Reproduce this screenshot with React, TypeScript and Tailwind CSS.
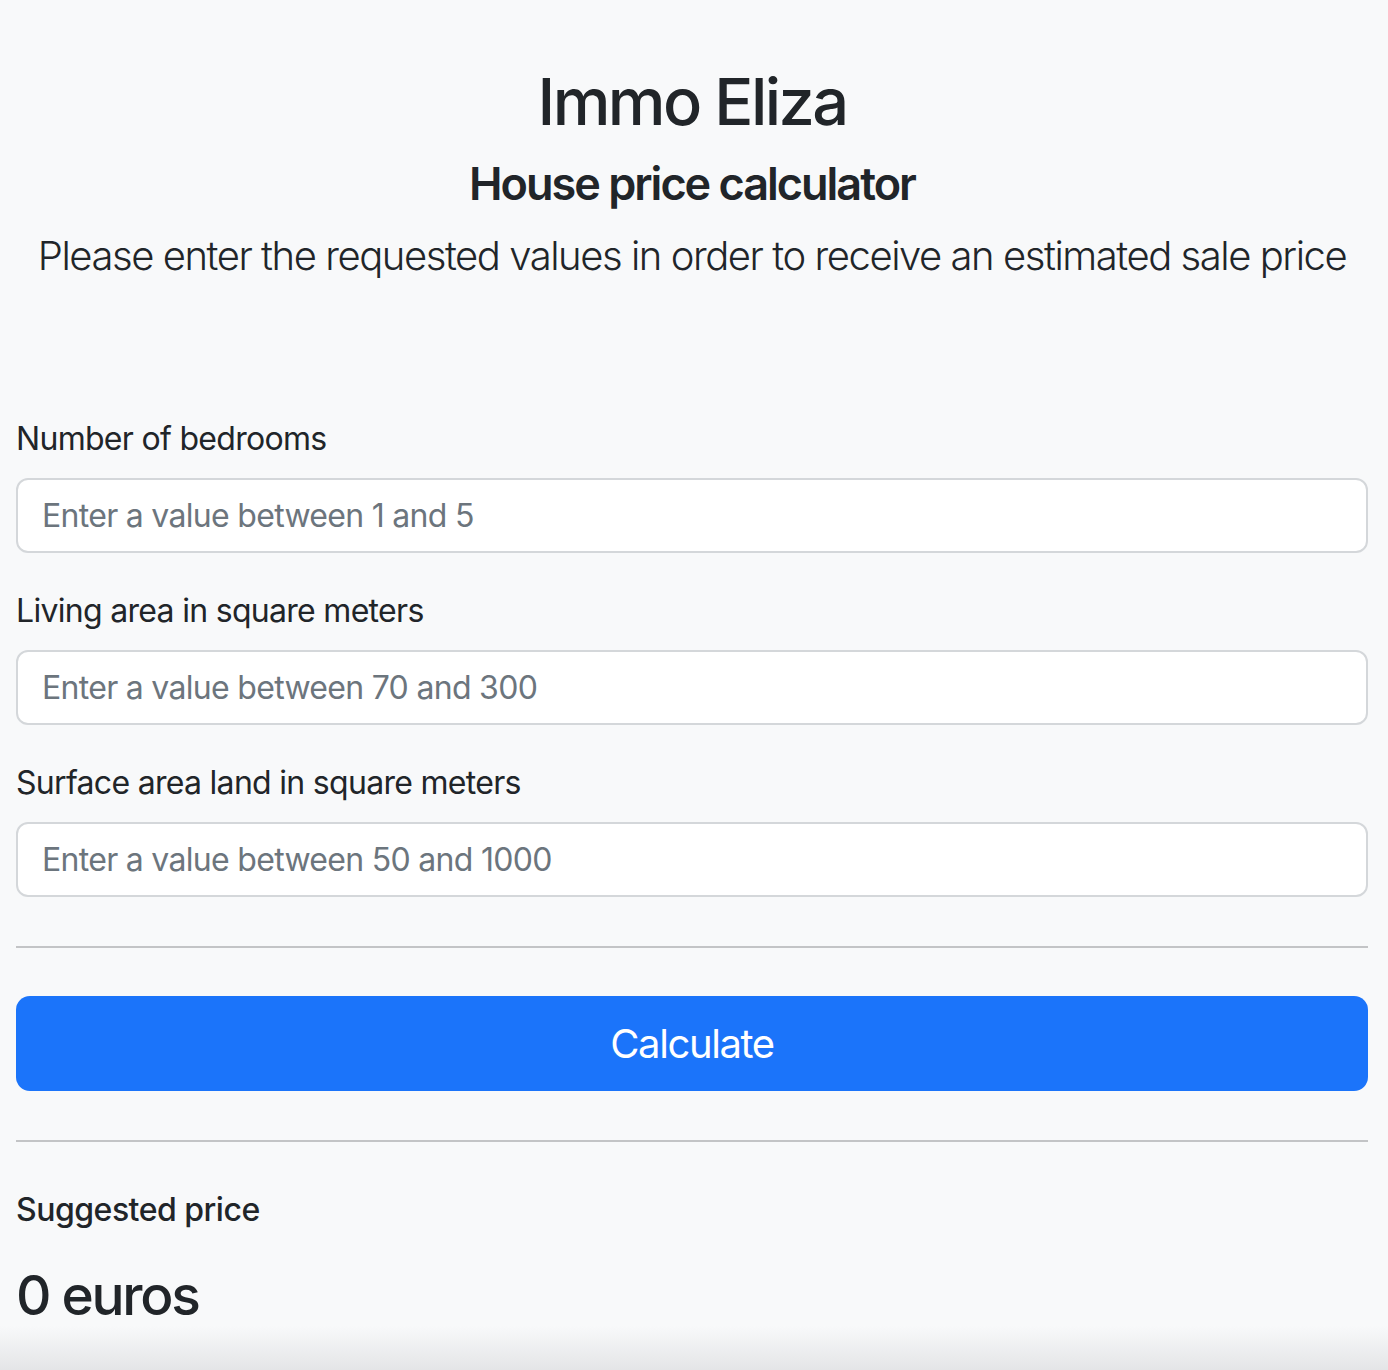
import React from "react";

const font = { fontFamily: "Inter, 'Noto Sans', sans-serif" };

function Field({ label, placeholder }: { label: string; placeholder: string }) {
  return (
    <div className="flex flex-col">
      <label className="text-[32px] leading-[48px] tracking-[-0.7px] text-[#212529]">{label}</label>
      <input
        type="text"
        placeholder={placeholder}
        className="mt-[15px] h-[75px] w-full rounded-[12px] border-2 border-[#d4d7da] bg-white px-[24px] text-[32px] tracking-[-0.7px] text-[#212529] placeholder:text-[#6c757d] outline-none"
      />
    </div>
  );
}

export default function App() {
  return (
    <div
      className="relative min-h-[1370px] bg-[#f8f9fa] pl-4 pr-5 text-[#212529]"
      style={font}
    >
      <header className="flex flex-col items-center pt-[63px] text-center">
        <h1 className="text-[65px] font-medium leading-[78px] tracking-[-2.6px]">Immo Eliza</h1>
        <h2 className="mt-[16px] text-[45px] font-semibold leading-[54px] tracking-[-2px]">House price calculator</h2>
        <p className="mt-[15px] whitespace-nowrap text-[40px] font-light leading-[60px] tracking-[-1.45px]">
          Please enter the requested values in order to receive an estimated sale price
        </p>
      </header>

      <form className="mt-[129px] flex flex-col gap-[34px]" onSubmit={(e) => e.preventDefault()}>
        <Field label="Number of bedrooms" placeholder="Enter a value between 1 and 5" />
        <Field label="Living area in square meters" placeholder="Enter a value between 70 and 300" />
        <Field label="Surface area land in square meters" placeholder="Enter a value between 50 and 1000" />
      </form>

      <hr className="mt-[49px] border-t-2 border-[#c3c4c6]" />

      <button className="mt-[48px] h-[95px] w-full rounded-[14px] bg-[#1b74fa] text-[40px] tracking-[-1.4px] text-white">
        Calculate
      </button>

      <hr className="mt-[49px] border-t-2 border-[#c3c4c6]" />

      <div className="mt-[44px] text-[32px] font-medium leading-[48px] tracking-[-0.5px]">Suggested price</div>
      <div className="mt-[28px] text-[55px] font-medium leading-[67px] tracking-[-2.3px]">0 euros</div>

      <div className="pointer-events-none absolute bottom-0 left-0 h-[44px] w-full bg-gradient-to-b from-[#f8f9fa00] to-[#e4e5e7]" />
    </div>
  );
}
